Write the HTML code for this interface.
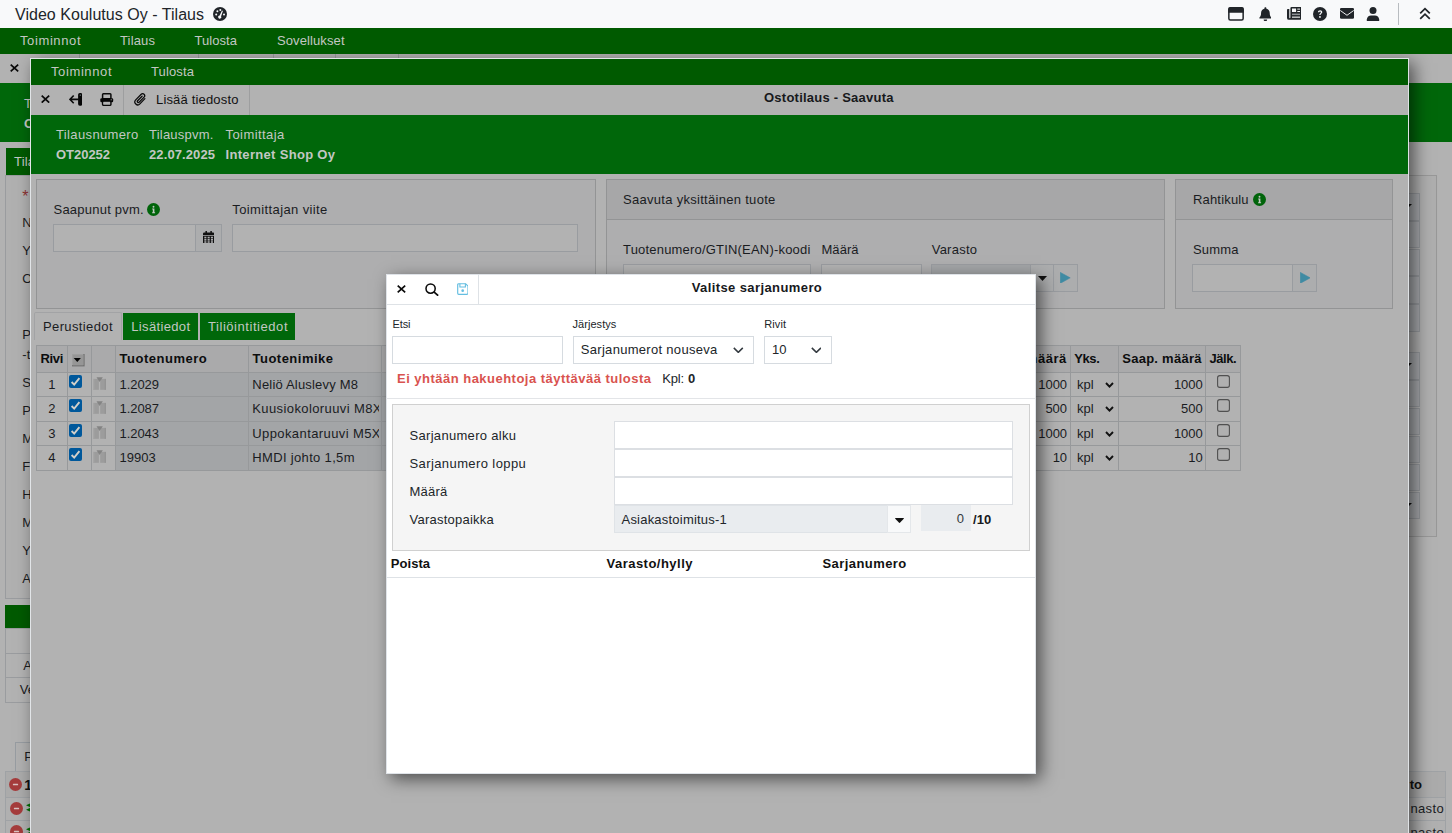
<!DOCTYPE html>
<html lang="fi"><head><meta charset="utf-8"><title>Video Koulutus Oy - Tilaus</title>
<style>
html,body{margin:0;padding:0}
body{width:1452px;height:833px;overflow:hidden;position:relative;background:#b2b2b2;font-family:"Liberation Sans",sans-serif}
#page,#m1,#m2{position:absolute;left:0;top:0;width:1452px;height:833px;overflow:hidden}
#m1{top:54px;height:779px}
#page div,#page svg,#page span,#m1 div,#m1 svg,#m1 span,#m2 div,#m2 svg,#m2 span{position:absolute}
.t{white-space:pre;line-height:0}
</style></head>
<body>
<div id="page">
<div style="left:0.00px;top:0.00px;width:1452.00px;height:28.00px;background:#f8f9fa;"></div>
<span class="t" style="left:15.00px;top:15.00px;font-size:16px;color:#212529;letter-spacing:0.030px;">Video Koulutus Oy - Tilaus</span>
<svg style="left:213.00px;top:7.00px;" width="14.00" height="14.00" viewBox="0 0 14 14" preserveAspectRatio="none"><circle cx="7" cy="7" r="7" fill="#212529"/><circle cx="3.2" cy="7.4" r="1" fill="#f8f9fa"/><circle cx="4.4" cy="4.2" r="1" fill="#f8f9fa"/><circle cx="7.3" cy="2.9" r="1" fill="#f8f9fa"/><circle cx="11" cy="7.4" r="1" fill="#f8f9fa"/><path d="M9 3.6 L9.9 3.9 L8.1 9.2 A1.6 1.6 0 1 1 6.6 8.4 Z" fill="#f8f9fa"/></svg>
<svg style="left:1228.00px;top:7.00px;" width="16.00" height="13.80" viewBox="0 0 16 13.8" preserveAspectRatio="none"><rect x="0.85" y="0.85" width="14.3" height="12.1" rx="1.5" fill="none" stroke="#212529" stroke-width="1.5"/><path d="M0.2 5.8 V2.2 A2 2 0 0 1 2.2 0.2 H13.8 A2 2 0 0 1 15.8 2.2 V5.8 Z" fill="#212529"/></svg>
<svg style="left:1258.70px;top:6.50px;" width="12.80" height="14.50" viewBox="0 0 13 15" preserveAspectRatio="none"><path d="M6.5 0.2 C7.1 0.2 7.5 0.7 7.5 1.2 V1.7 C9.6 2.2 10.9 4 10.9 6.2 C10.9 8.8 11.6 9.9 12.5 10.8 C12.9 11.3 12.6 12 12 12 H1 C0.4 12 0.1 11.3 0.5 10.8 C1.4 9.9 2.1 8.8 2.1 6.2 C2.1 4 3.4 2.2 5.5 1.7 V1.2 C5.5 0.7 5.9 0.2 6.5 0.2 Z M4.7 12.9 H8.3 A1.8 1.8 0 0 1 4.7 12.9 Z" fill="#212529"/></svg>
<svg style="left:1286.60px;top:7.30px;" width="14.60" height="12.80" viewBox="0 0 14.6 12.8" preserveAspectRatio="none"><path d="M4.6 0 H13.4 A1.2 1.2 0 0 1 14.6 1.2 V11 A1.8 1.8 0 0 1 12.8 12.8 H1.9 A1.9 1.9 0 0 1 0 10.9 V2.9 A0.8 0.8 0 0 1 0.8 2.1 H2.3 V10.6 A0.55 0.55 0 0 0 3.4 10.6 V1.2 A1.2 1.2 0 0 1 4.6 0 Z" fill="#212529"/><rect x="5" y="1.5" width="4.1" height="3.5" fill="#f8f9fa"/><rect x="10.3" y="1.6" width="2.7" height="1" fill="#f8f9fa"/><rect x="10.3" y="4" width="2.7" height="1" fill="#f8f9fa"/><rect x="5" y="6.6" width="8" height="1.5" fill="#8c9094"/><rect x="5" y="9.6" width="8" height="1.1" fill="#f8f9fa"/></svg>
<svg style="left:1313.00px;top:7.00px;" width="14.00" height="14.00" viewBox="0 0 14 14" preserveAspectRatio="none"><circle cx="7" cy="7" r="7" fill="#212529"/><path d="M4.9 5.3 C4.9 3.9 5.9 3.2 7.1 3.2 C8.4 3.2 9.3 4 9.3 5.1 C9.3 6.6 7.6 6.6 7.6 8.1 H6.3 C6.3 6.3 7.9 6.2 7.9 5.2 C7.9 4.7 7.6 4.4 7.1 4.4 C6.6 4.4 6.2 4.7 6.2 5.3 Z" fill="#f8f9fa"/><circle cx="6.95" cy="9.9" r="0.95" fill="#f8f9fa"/></svg>
<svg style="left:1340.00px;top:8.20px;" width="14.00" height="10.70" viewBox="0 0 14 10.7" preserveAspectRatio="none"><rect x="0" y="0" width="14" height="10.7" rx="1.3" fill="#212529"/><path d="M0.3 2.5 L7 7.3 L13.7 2.5" fill="none" stroke="#f8f9fa" stroke-width="0.95"/></svg>
<svg style="left:1366.00px;top:7.00px;" width="14.00" height="14.00" viewBox="0 0 14 14" preserveAspectRatio="none"><circle cx="7" cy="3.6" r="3.5" fill="#212529"/><path d="M0.8 14 V12.6 C0.8 9.9 3 8.4 5 8.4 H9 C11 8.4 13.2 9.9 13.2 12.6 V14 Z" fill="#212529"/></svg>
<div style="left:1398.00px;top:3.00px;width:1.00px;height:22.00px;background:#b8bcc0;"></div>
<svg style="left:1418.50px;top:6.80px;" width="12.00" height="13.00" viewBox="0 0 12 13" preserveAspectRatio="none"><path d="M1.2 6.3 L6 1.6 L10.8 6.3 M1.2 11.9 L6 7.2 L10.8 11.9" fill="none" stroke="#212529" stroke-width="1.75"/></svg>
<div style="left:0.00px;top:28.00px;width:1452.00px;height:26.00px;background:#005a00;"></div>
<span class="t" style="left:20.00px;top:41.00px;font-size:13px;color:#c3c7c3;letter-spacing:0.607px;">Toiminnot</span>
<span class="t" style="left:120.00px;top:41.00px;font-size:13px;color:#c3c7c3;letter-spacing:0.159px;">Tilaus</span>
<span class="t" style="left:194.50px;top:41.00px;font-size:13px;color:#c3c7c3;letter-spacing:0.057px;">Tulosta</span>
<span class="t" style="left:277.00px;top:41.00px;font-size:13px;color:#c3c7c3;letter-spacing:0.102px;">Sovellukset</span>
<div style="left:0.00px;top:54.00px;width:1452.00px;height:779.00px;background:#b2b2b2;"></div>
<div style="left:79.00px;top:54.00px;width:1.00px;height:29.00px;background:#9a9b9e;"></div>
<div style="left:198.00px;top:54.00px;width:1.00px;height:29.00px;background:#9a9b9e;"></div>
<div style="left:273.00px;top:54.00px;width:1.00px;height:29.00px;background:#9a9b9e;"></div>
<div style="left:335.00px;top:54.00px;width:1.00px;height:29.00px;background:#9a9b9e;"></div>
<div style="left:398.00px;top:54.00px;width:1.00px;height:29.00px;background:#9a9b9e;"></div>
<svg style="left:10.20px;top:64.00px;" width="8.90" height="8.00" viewBox="0 0 8.9 8" preserveAspectRatio="none"><path d="M0.7 0.7 L8.2 7.3 M8.2 0.7 L0.7 7.3" stroke="#0a0a0a" stroke-width="1.75" fill="none"/></svg>
<div style="left:0.00px;top:83.00px;width:1452.00px;height:59.00px;background:#00670a;"></div>
<span class="t" style="left:24.00px;top:104.00px;font-size:13px;color:#c3c7c3;">T</span>
<span class="t" style="left:24.00px;top:124.00px;font-size:13px;color:#c3c7c3;font-weight:700;">O</span>
<div style="left:6.00px;top:148.00px;width:54.00px;height:27.00px;background:#005a00;"></div>
<span class="t" style="left:14.00px;top:162.00px;font-size:13px;color:#c3c7c3;letter-spacing:0.177px;">Tila</span>
<div style="left:5.00px;top:175.00px;width:695.00px;height:424.00px;background:#b0b0b0;border:1px solid #9a9c9f;box-sizing:border-box;"></div>
<div style="left:800.00px;top:175.00px;width:637.00px;height:362.00px;background:#aeaeae;border:1px solid #989898;box-sizing:border-box;"></div>
<span class="t" style="left:22.30px;top:197.00px;font-size:16px;color:#8c3232;">*</span>
<span class="t" style="left:22.30px;top:223.00px;font-size:13px;color:#1a1c1f;">N</span>
<span class="t" style="left:22.30px;top:251.00px;font-size:13px;color:#1a1c1f;">Y</span>
<span class="t" style="left:22.30px;top:279.00px;font-size:13px;color:#1a1c1f;">O</span>
<span class="t" style="left:22.30px;top:335.00px;font-size:13px;color:#1a1c1f;">P</span>
<span class="t" style="left:22.30px;top:355.00px;font-size:13px;color:#1a1c1f;">-t</span>
<span class="t" style="left:22.30px;top:383.00px;font-size:13px;color:#1a1c1f;">S</span>
<span class="t" style="left:22.30px;top:411.00px;font-size:13px;color:#1a1c1f;">P</span>
<span class="t" style="left:22.30px;top:439.00px;font-size:13px;color:#1a1c1f;">M</span>
<span class="t" style="left:22.30px;top:467.00px;font-size:13px;color:#1a1c1f;">F</span>
<span class="t" style="left:22.30px;top:495.00px;font-size:13px;color:#1a1c1f;">H</span>
<span class="t" style="left:22.30px;top:523.00px;font-size:13px;color:#1a1c1f;">M</span>
<span class="t" style="left:22.30px;top:551.00px;font-size:13px;color:#1a1c1f;">Y</span>
<span class="t" style="left:22.30px;top:579.00px;font-size:13px;color:#1a1c1f;">A</span>
<div style="left:5.00px;top:605.00px;width:395.00px;height:23.00px;background:#005a00;"></div>
<div style="left:5.00px;top:628.00px;width:395.00px;height:75.00px;background:#b2b2b2;border:1px solid #9a9c9f;box-sizing:border-box;"></div>
<div style="left:5.00px;top:653.00px;width:395.00px;height:1.00px;background:#9a9c9f;"></div>
<div style="left:5.00px;top:677.00px;width:395.00px;height:1.00px;background:#9a9c9f;"></div>
<span class="t" style="left:23.20px;top:666.00px;font-size:13px;color:#1a1c1f;">A</span>
<span class="t" style="left:19.80px;top:690.00px;font-size:13px;color:#1a1c1f;">Ve</span>
<div style="left:15.00px;top:742.00px;width:85.00px;height:30.00px;background:#b0b0b0;border:1px solid #979ca1;box-sizing:border-box;"></div>
<span class="t" style="left:24.30px;top:757.00px;font-size:13px;color:#1a1c1f;">P</span>
<div style="left:5.00px;top:771.00px;width:1441.00px;height:69.00px;background:#b0b0b0;border:1px solid #9fa2a5;box-sizing:border-box;"></div>
<div style="left:5.00px;top:771.00px;width:1441.00px;height:27.00px;background:#ababab;border:1px solid #9fa2a5;box-sizing:border-box;"></div>
<div style="left:6.00px;top:820.00px;width:1440.00px;height:1.00px;background:#9fa2a5;"></div>
<svg style="left:9.00px;top:777.70px;" width="13.00" height="13.00" viewBox="0 0 13 13" preserveAspectRatio="none"><circle cx="6.5" cy="6.5" r="6.5" fill="#a53c3c"/><rect x="3.9" y="5.65" width="5.2" height="1.7" rx="0.5" fill="#d9c0c0"/></svg>
<svg style="left:9.80px;top:801.50px;" width="13.00" height="13.00" viewBox="0 0 13 13" preserveAspectRatio="none"><circle cx="6.5" cy="6.5" r="6.5" fill="#a53c3c"/><rect x="3.9" y="5.65" width="5.2" height="1.7" rx="0.5" fill="#d9c0c0"/></svg>
<svg style="left:9.80px;top:825.10px;" width="13.00" height="13.00" viewBox="0 0 13 13" preserveAspectRatio="none"><circle cx="6.5" cy="6.5" r="6.5" fill="#a53c3c"/><rect x="3.9" y="5.65" width="5.2" height="1.7" rx="0.5" fill="#d9c0c0"/></svg>
<span class="t" style="left:24.20px;top:785.00px;font-size:14px;color:#111;font-weight:700;">1</span>
<svg style="left:25.70px;top:803.00px;" width="6.00" height="9.00" viewBox="0 0 6 9" preserveAspectRatio="none"><path d="M0 2.3 L6 -0.4 V5 Z M0 6.7 L6 4 V9.4 Z" fill="#006e00"/></svg>
<svg style="left:25.70px;top:826.60px;" width="6.00" height="9.00" viewBox="0 0 6 9" preserveAspectRatio="none"><path d="M0 2.3 L6 -0.4 V5 Z M0 6.7 L6 4 V9.4 Z" fill="#006e00"/></svg>
<div style="left:1300.00px;top:193.00px;width:120.00px;height:27.60px;background:#a6a8ab;border:1px solid #94979b;box-sizing:border-box;"></div>
<div style="left:1300.00px;top:220.80px;width:120.00px;height:27.60px;background:#a6a8ab;border:1px solid #94979b;box-sizing:border-box;"></div>
<div style="left:1300.00px;top:248.60px;width:120.00px;height:27.60px;background:#a6a8ab;border:1px solid #94979b;box-sizing:border-box;"></div>
<div style="left:1300.00px;top:276.40px;width:120.00px;height:27.60px;background:#a6a8ab;border:1px solid #94979b;box-sizing:border-box;"></div>
<div style="left:1300.00px;top:304.20px;width:120.00px;height:27.60px;background:#a6a8ab;border:1px solid #94979b;box-sizing:border-box;"></div>
<div style="left:1300.00px;top:352.00px;width:120.00px;height:27.60px;background:#a6a8ab;border:1px solid #94979b;box-sizing:border-box;"></div>
<div style="left:1300.00px;top:379.90px;width:120.00px;height:27.60px;background:#a6a8ab;border:1px solid #94979b;box-sizing:border-box;"></div>
<div style="left:1300.00px;top:407.80px;width:120.00px;height:27.60px;background:#a6a8ab;border:1px solid #94979b;box-sizing:border-box;"></div>
<div style="left:1300.00px;top:435.70px;width:120.00px;height:27.60px;background:#a6a8ab;border:1px solid #94979b;box-sizing:border-box;"></div>
<div style="left:1300.00px;top:463.60px;width:120.00px;height:27.60px;background:#a6a8ab;border:1px solid #94979b;box-sizing:border-box;"></div>
<div style="left:1300.00px;top:491.50px;width:120.00px;height:27.60px;background:#a6a8ab;border:1px solid #94979b;box-sizing:border-box;"></div>
<svg style="left:1403.40px;top:204.40px;" width="9.00" height="4.60" viewBox="0 0 9 4.6" preserveAspectRatio="none"><path d="M0 0 H9 L4.5 4.6 Z" fill="#0a0a0a"/></svg>
<svg style="left:1403.40px;top:363.20px;" width="9.00" height="4.60" viewBox="0 0 9 4.6" preserveAspectRatio="none"><path d="M0 0 H9 L4.5 4.6 Z" fill="#0a0a0a"/></svg>
<svg style="left:1403.40px;top:503.20px;" width="9.00" height="4.60" viewBox="0 0 9 4.6" preserveAspectRatio="none"><path d="M0 0 H9 L4.5 4.6 Z" fill="#0a0a0a"/></svg>
<span class="t" style="left:1409.71px;top:785.00px;font-size:13px;color:#111;font-weight:700;">to</span>
<span class="t" style="left:1410.40px;top:809.00px;font-size:13px;color:#1a1c1f;letter-spacing:0.372px;">nasto</span>
<span class="t" style="left:1410.40px;top:833.00px;font-size:13px;color:#1a1c1f;letter-spacing:0.372px;">nasto</span>
</div>
<div id="m1">
<div style="left:30px;top:4px;width:1379px;height:800px;background:#b2b2b2;box-shadow:5px 5px 16px rgba(0,0,0,.56);"></div>
<div style="left:30.00px;top:4.00px;width:1379.00px;height:1.00px;background:#e2e5e8;"></div>
<div style="left:30.00px;top:4.00px;width:1.00px;height:775.00px;background:#e2e5e8;"></div>
<div style="left:1408.00px;top:4.00px;width:1.00px;height:775.00px;background:#dfe2e5;"></div>
<div style="left:31.00px;top:5.00px;width:1377.00px;height:26.00px;background:#005a00;"></div>
<span class="t" style="left:51.00px;top:18.00px;font-size:13px;color:#c3c7c3;letter-spacing:0.607px;">Toiminnot</span>
<span class="t" style="left:151.00px;top:18.00px;font-size:13px;color:#c3c7c3;letter-spacing:0.141px;">Tulosta</span>
<svg style="left:41.30px;top:40.90px;" width="8.90" height="8.30" viewBox="0 0 8.9 8.3" preserveAspectRatio="none"><path d="M0.7 0.7 L8.2 7.6 M8.2 0.7 L0.7 7.6" stroke="#0a0a0a" stroke-width="1.75" fill="none"/></svg>
<svg style="left:68.50px;top:39.00px;" width="13.50" height="13.00" viewBox="0 0 13.5 13" preserveAspectRatio="none"><path d="M1 6.4 H9.5 M4.7 2.5 L0.9 6.4 L4.7 10.3" stroke="#0a0a0a" stroke-width="1.6" fill="none"/><rect x="9.1" y="0.1" width="4.3" height="12.7" rx="1.7" fill="#050505"/><circle cx="11.25" cy="2.1" r="0.6" fill="#9aa"/></svg>
<svg style="left:100.20px;top:38.70px;" width="13.50" height="13.00" viewBox="0 0 13.5 13" preserveAspectRatio="none"><rect x="2.6" y="0.8" width="8.3" height="5" rx="0.8" fill="none" stroke="#0a0a0a" stroke-width="1.5"/><rect x="2.6" y="8" width="8.3" height="4.2" rx="0.6" fill="#b2b2b2" stroke="#0a0a0a" stroke-width="1.5"/><rect x="0.3" y="5.2" width="12.9" height="4.1" rx="1.2" fill="#050505"/><circle cx="11.2" cy="6.7" r="0.55" fill="#ccc"/><rect x="3.4" y="8.8" width="6.7" height="2.7" fill="#b2b2b2"/></svg>
<div style="left:123.00px;top:31.00px;width:1.00px;height:29.50px;background:#9d9e9f;"></div>
<svg style="left:134.00px;top:39.00px;" width="12.00" height="12.80" viewBox="0 0 12 12.8" preserveAspectRatio="none"><path d="M10.9 5.6 L5.9 10.9 A2.9 2.9 0 0 1 1.7 6.9 L7.2 1.3 A2 2 0 0 1 10.1 4.1 L5.1 9.2 A1 1 0 0 1 3.6 7.8 L8.1 3.2" stroke="#0a0a0a" stroke-width="1.25" fill="none" stroke-linecap="round"/></svg>
<span class="t" style="left:156.00px;top:46.00px;font-size:13px;color:#111;letter-spacing:0.167px;">Lisää tiedosto</span>
<div style="left:249.00px;top:31.00px;width:1.00px;height:29.50px;background:#9d9e9f;"></div>
<span class="t" style="left:764.00px;top:44.00px;font-size:13px;color:#17191c;font-weight:700;letter-spacing:0.238px;">Ostotilaus - Saavuta</span>
<div style="left:31.00px;top:60.50px;width:1377.00px;height:59.00px;background:#00670a;"></div>
<span class="t" style="left:56.00px;top:81.00px;font-size:13px;color:#c3c7c3;letter-spacing:0.365px;">Tilausnumero</span>
<span class="t" style="left:149.00px;top:81.00px;font-size:13px;color:#c3c7c3;letter-spacing:0.214px;">Tilauspvm.</span>
<span class="t" style="left:225.50px;top:81.00px;font-size:13px;color:#c3c7c3;letter-spacing:0.431px;">Toimittaja</span>
<span class="t" style="left:56.00px;top:101.00px;font-size:13px;color:#c3c7c3;font-weight:700;letter-spacing:-0.034px;">OT20252</span>
<span class="t" style="left:149.00px;top:101.00px;font-size:13px;color:#c3c7c3;font-weight:700;letter-spacing:0.102px;">22.07.2025</span>
<span class="t" style="left:225.50px;top:101.00px;font-size:13px;color:#c3c7c3;font-weight:700;letter-spacing:0.318px;">Internet Shop Oy</span>
<div style="left:36.00px;top:125.00px;width:560.00px;height:130.00px;background:#aeaeaf;border:1px solid #939495;box-sizing:border-box;"></div>
<div style="left:606.00px;top:125.00px;width:559.00px;height:130.00px;background:#aeaeaf;border:1px solid #939495;box-sizing:border-box;"></div>
<div style="left:607.00px;top:126.00px;width:557.00px;height:39.00px;background:#a7a7a8;"></div>
<div style="left:606.00px;top:165.00px;width:559.00px;height:1.00px;background:#939495;"></div>
<div style="left:1175.00px;top:125.00px;width:218.00px;height:130.00px;background:#aeaeaf;border:1px solid #939495;box-sizing:border-box;"></div>
<div style="left:1176.00px;top:126.00px;width:216.00px;height:39.00px;background:#a7a7a8;"></div>
<div style="left:1175.00px;top:165.00px;width:218.00px;height:1.00px;background:#939495;"></div>
<span class="t" style="left:53.50px;top:156.00px;font-size:13px;color:#1a1c1f;letter-spacing:0.229px;">Saapunut pvm.</span>
<svg style="left:147.00px;top:148.80px;" width="13.00" height="13.00" viewBox="0 0 13 13" preserveAspectRatio="none"><circle cx="6.5" cy="6.5" r="6.5" fill="#00640a"/><path d="M5.2 5.4 H7.4 V9.3 H8.1 V10.3 H5.1 V9.3 H5.8 V6.4 H5.2 Z" fill="#c4c8c4"/><circle cx="6.5" cy="3.7" r="0.95" fill="#c4c8c4"/></svg>
<span class="t" style="left:232.30px;top:156.00px;font-size:13px;color:#1a1c1f;letter-spacing:0.383px;">Toimittajan viite</span>
<div style="left:53.00px;top:170.00px;width:143.00px;height:28.00px;background:#b2b2b2;border:1px solid #999ca0;box-sizing:border-box;"></div>
<div style="left:195.00px;top:170.00px;width:27.00px;height:28.00px;background:#acadae;border:1px solid #999ca0;box-sizing:border-box;"></div>
<svg style="left:202.60px;top:176.70px;" width="11.30" height="12.80" viewBox="0 0 12 13" preserveAspectRatio="none"><path d="M2.6 0 H4.2 V1.5 H7.8 V0 H9.4 V1.5 H10.6 A1.4 1.4 0 0 1 12 2.9 V4 H0 V2.9 A1.4 1.4 0 0 1 1.4 1.5 H2.6 Z M0 4.8 H12 V11.6 A1.4 1.4 0 0 1 10.6 13 H1.4 A1.4 1.4 0 0 1 0 11.6 Z" fill="#111"/><g fill="#acadae"><rect x="1.4" y="5.8" width="2.2" height="1.7"/><rect x="4.9" y="5.8" width="2.2" height="1.7"/><rect x="8.4" y="5.8" width="2.2" height="1.7"/><rect x="1.4" y="8.1" width="2.2" height="1.7"/><rect x="4.9" y="8.1" width="2.2" height="1.7"/><rect x="8.4" y="8.1" width="2.2" height="1.7"/><rect x="1.4" y="10.4" width="2.2" height="1.6"/><rect x="4.9" y="10.4" width="2.2" height="1.6"/><rect x="8.4" y="10.4" width="2.2" height="1.6"/></g></svg>
<div style="left:232.00px;top:170.00px;width:346.00px;height:28.00px;background:#b2b2b2;border:1px solid #999ca0;box-sizing:border-box;"></div>
<span class="t" style="left:623.00px;top:146.00px;font-size:13px;color:#1a1c1f;letter-spacing:0.293px;">Saavuta yksittäinen tuote</span>
<span class="t" style="left:623.00px;top:196.00px;font-size:13px;color:#1a1c1f;letter-spacing:0.192px;">Tuotenumero/GTIN(EAN)-koodi</span>
<span class="t" style="left:821.50px;top:196.00px;font-size:13px;color:#1a1c1f;letter-spacing:0.035px;">Määrä</span>
<span class="t" style="left:931.70px;top:196.00px;font-size:13px;color:#1a1c1f;letter-spacing:0.243px;">Varasto</span>
<div style="left:623.00px;top:210.00px;width:188.00px;height:28.00px;background:#b2b2b2;border:1px solid #999ca0;box-sizing:border-box;"></div>
<div style="left:821.00px;top:210.00px;width:101.00px;height:28.00px;background:#b2b2b2;border:1px solid #999ca0;box-sizing:border-box;"></div>
<div style="left:931.00px;top:210.00px;width:100.00px;height:28.00px;background:#a3a5a7;border:1px solid #999ca0;box-sizing:border-box;"></div>
<div style="left:1030.00px;top:210.00px;width:24.00px;height:28.00px;background:#acadae;border:1px solid #999ca0;box-sizing:border-box;"></div>
<svg style="left:1038.00px;top:222.00px;" width="9.00" height="5.00" viewBox="0 0 9 5" preserveAspectRatio="none"><path d="M0 0 H9 L4.5 5 Z" fill="#111"/></svg>
<div style="left:1053.00px;top:210.00px;width:25.00px;height:28.00px;background:#acadae;border:1px solid #999ca0;box-sizing:border-box;"></div>
<svg style="left:1060.30px;top:217.70px;" width="10.40" height="11.70" viewBox="0 0 10 12" preserveAspectRatio="none"><path d="M0.3 0.4 L9.8 6 L0.3 11.6 Z" fill="#3f8ba3" stroke="#3f8ba3" stroke-width="0.6" stroke-linejoin="round"/></svg>
<span class="t" style="left:1193.00px;top:146.00px;font-size:13px;color:#1a1c1f;letter-spacing:0.175px;">Rahtikulu</span>
<svg style="left:1252.50px;top:138.90px;" width="13.00" height="13.00" viewBox="0 0 13 13" preserveAspectRatio="none"><circle cx="6.5" cy="6.5" r="6.5" fill="#00640a"/><path d="M5.2 5.4 H7.4 V9.3 H8.1 V10.3 H5.1 V9.3 H5.8 V6.4 H5.2 Z" fill="#c4c8c4"/><circle cx="6.5" cy="3.7" r="0.95" fill="#c4c8c4"/></svg>
<span class="t" style="left:1193.00px;top:196.00px;font-size:13px;color:#1a1c1f;letter-spacing:0.151px;">Summa</span>
<div style="left:1192.00px;top:210.00px;width:101.00px;height:28.00px;background:#b2b2b2;border:1px solid #999ca0;box-sizing:border-box;"></div>
<div style="left:1292.00px;top:210.00px;width:25.00px;height:28.00px;background:#acadae;border:1px solid #999ca0;box-sizing:border-box;"></div>
<svg style="left:1300.10px;top:217.70px;" width="10.40" height="11.70" viewBox="0 0 10 12" preserveAspectRatio="none"><path d="M0.3 0.4 L9.8 6 L0.3 11.6 Z" fill="#3f8ba3" stroke="#3f8ba3" stroke-width="0.6" stroke-linejoin="round"/></svg>
<div style="left:34.00px;top:258.00px;width:88.00px;height:28.00px;background:#b2b2b2;border:1px solid #a2a3a5;box-sizing:border-box;border-bottom:none;border-radius:2px 2px 0 0;"></div>
<span class="t" style="left:43.00px;top:273.00px;font-size:13px;color:#1a1c1f;letter-spacing:0.373px;">Perustiedot</span>
<div style="left:123.00px;top:258.70px;width:75.00px;height:27.60px;background:#00670a;"></div>
<span class="t" style="left:131.30px;top:273.00px;font-size:13px;color:#c3c7c3;letter-spacing:0.338px;">Lisätiedot</span>
<div style="left:200.00px;top:258.70px;width:95.30px;height:27.60px;background:#00670a;"></div>
<span class="t" style="left:208.00px;top:273.00px;font-size:13px;color:#c3c7c3;letter-spacing:0.551px;">Tiliöintitiedot</span>
<div style="left:36.00px;top:291.00px;width:1204.50px;height:27.00px;background:#aaaaab;"></div>
<div style="left:115.00px;top:318.00px;width:921.00px;height:98.00px;background:#a3a5a7;"></div>
<div style="left:36.00px;top:291.00px;width:1205.00px;height:1.00px;background:#97999b;"></div>
<div style="left:36.00px;top:318.00px;width:1205.00px;height:1.00px;background:#97999b;"></div>
<div style="left:36.00px;top:342.00px;width:1205.00px;height:1.00px;background:#97999b;"></div>
<div style="left:36.00px;top:367.00px;width:1205.00px;height:1.00px;background:#97999b;"></div>
<div style="left:36.00px;top:391.00px;width:1205.00px;height:1.00px;background:#97999b;"></div>
<div style="left:36.00px;top:416.00px;width:1205.00px;height:1.00px;background:#97999b;"></div>
<div style="left:36.00px;top:291.00px;width:1.00px;height:125.50px;background:#97999b;"></div>
<div style="left:67.00px;top:291.00px;width:1.00px;height:125.50px;background:#97999b;"></div>
<div style="left:91.00px;top:291.00px;width:1.00px;height:125.50px;background:#97999b;"></div>
<div style="left:115.00px;top:291.00px;width:1.00px;height:125.50px;background:#97999b;"></div>
<div style="left:248.00px;top:291.00px;width:1.00px;height:125.50px;background:#97999b;"></div>
<div style="left:381.00px;top:291.00px;width:1.00px;height:125.50px;background:#97999b;"></div>
<div style="left:500.00px;top:291.00px;width:1.00px;height:125.50px;background:#97999b;"></div>
<div style="left:620.00px;top:291.00px;width:1.00px;height:125.50px;background:#97999b;"></div>
<div style="left:740.00px;top:291.00px;width:1.00px;height:125.50px;background:#97999b;"></div>
<div style="left:860.00px;top:291.00px;width:1.00px;height:125.50px;background:#97999b;"></div>
<div style="left:950.00px;top:291.00px;width:1.00px;height:125.50px;background:#97999b;"></div>
<div style="left:1010.00px;top:291.00px;width:1.00px;height:125.50px;background:#97999b;"></div>
<div style="left:1070.00px;top:291.00px;width:1.00px;height:125.50px;background:#97999b;"></div>
<div style="left:1118.00px;top:291.00px;width:1.00px;height:125.50px;background:#97999b;"></div>
<div style="left:1205.00px;top:291.00px;width:1.00px;height:125.50px;background:#97999b;"></div>
<div style="left:1240.00px;top:291.00px;width:1.00px;height:125.50px;background:#97999b;"></div>
<span class="t" style="left:40.50px;top:305.00px;font-size:13px;color:#0c0d0e;font-weight:700;letter-spacing:-0.348px;">Rivi</span>
<svg style="left:72.40px;top:300.20px;" width="12.60" height="12.40" viewBox="0 0 12.6 12.4" preserveAspectRatio="none"><rect x="0" y="0" width="12.6" height="12.4" fill="#6e6e6e"/><rect x="0" y="0" width="11.4" height="11.2" fill="#a0a0a0"/><rect x="0.9" y="0.9" width="10.5" height="10.3" fill="#969696"/><path d="M1.7 4 H8.9 L5.3 8 Z" fill="#050505"/></svg>
<span class="t" style="left:119.50px;top:305.00px;font-size:13px;color:#0c0d0e;font-weight:700;letter-spacing:0.521px;">Tuotenumero</span>
<span class="t" style="left:252.50px;top:305.00px;font-size:13px;color:#0c0d0e;font-weight:700;letter-spacing:0.489px;">Tuotenimike</span>
<span class="t" style="left:1025.80px;top:305.00px;font-size:13px;color:#0c0d0e;font-weight:700;letter-spacing:0.522px;">määrä</span>
<span class="t" style="left:1074.20px;top:305.00px;font-size:13px;color:#0c0d0e;font-weight:700;letter-spacing:-0.383px;">Yks.</span>
<span class="t" style="left:1122.20px;top:305.00px;font-size:13px;color:#0c0d0e;font-weight:700;letter-spacing:0.269px;">Saap. määrä</span>
<span class="t" style="left:1209.40px;top:305.00px;font-size:13px;color:#0c0d0e;font-weight:700;letter-spacing:-0.405px;">Jälk.</span>
<span class="t" style="left:48.13px;top:331.00px;font-size:13px;color:#1a1c1f;">1</span>
<svg style="left:69.00px;top:321.00px;" width="13.00" height="13.00" viewBox="0 0 13 13" preserveAspectRatio="none"><rect x="0" y="0" width="13" height="13" rx="2" fill="#00589b"/><path d="M2.6 7 L5.2 9.6 L10.4 3.2" stroke="#d3d0c9" stroke-width="1.9" fill="none"/></svg>
<svg style="left:93.00px;top:323.00px;" width="13.00" height="13.00" viewBox="0 0 13 13" preserveAspectRatio="none"><rect x="0.1" y="1.9" width="5.8" height="10.9" fill="#9c9c9c"/><rect x="7.2" y="1.9" width="5.7" height="10.9" fill="#9c9c9c"/><rect x="0.1" y="1.9" width="1.2" height="10.9" fill="#a6a6a6"/><rect x="11.7" y="1.9" width="1.2" height="10.9" fill="#939393"/><path d="M3.5 0.2 H9.8 L6.6 5 Z" fill="#838383"/></svg>
<span class="t" style="left:119.50px;top:331.00px;font-size:13px;color:#1a1c1f;letter-spacing:-0.053px;">1.2029</span>
<span class="t" style="left:252.30px;top:331.00px;font-size:13px;color:#1a1c1f;letter-spacing:0.193px;">Neliö Aluslevy M8</span>
<span class="t" style="left:1038.18px;top:331.00px;font-size:13px;color:#1a1c1f;">1000</span>
<span class="t" style="left:1076.94px;top:331.00px;font-size:13px;color:#1a1c1f;">kpl</span>
<svg style="left:1104.70px;top:327.50px;" width="9.00" height="6.00" viewBox="0 0 9 6" preserveAspectRatio="none"><path d="M1 1 L4.5 4.6 L8 1" stroke="#111" stroke-width="1.9" fill="none"/></svg>
<span class="t" style="left:1173.88px;top:331.00px;font-size:13px;color:#1a1c1f;">1000</span>
<svg style="left:1217.00px;top:321.00px;" width="13.00" height="13.00" viewBox="0 0 13 13" preserveAspectRatio="none"><rect x="0.6" y="0.6" width="11.8" height="11.8" rx="2.2" fill="#b0b0b0" stroke="#505050" stroke-width="1.1"/></svg>
<span class="t" style="left:48.13px;top:355.00px;font-size:13px;color:#1a1c1f;">2</span>
<svg style="left:69.00px;top:345.00px;" width="13.00" height="13.00" viewBox="0 0 13 13" preserveAspectRatio="none"><rect x="0" y="0" width="13" height="13" rx="2" fill="#00589b"/><path d="M2.6 7 L5.2 9.6 L10.4 3.2" stroke="#d3d0c9" stroke-width="1.9" fill="none"/></svg>
<svg style="left:93.00px;top:347.00px;" width="13.00" height="13.00" viewBox="0 0 13 13" preserveAspectRatio="none"><rect x="0.1" y="1.9" width="5.8" height="10.9" fill="#9c9c9c"/><rect x="7.2" y="1.9" width="5.7" height="10.9" fill="#9c9c9c"/><rect x="0.1" y="1.9" width="1.2" height="10.9" fill="#a6a6a6"/><rect x="11.7" y="1.9" width="1.2" height="10.9" fill="#939393"/><path d="M3.5 0.2 H9.8 L6.6 5 Z" fill="#838383"/></svg>
<span class="t" style="left:119.50px;top:355.00px;font-size:13px;color:#1a1c1f;letter-spacing:-0.053px;">1.2087</span>
<div style="left:249px;top:343px;width:129.60000000000002px;height:24px;overflow:hidden"><span class="t" style="left:3.30px;top:12px;font-size:13px;color:#1a1c1f;letter-spacing:0.393px;">Kuusiokoloruuvi M8X</span></div>
<span class="t" style="left:1045.40px;top:355.00px;font-size:13px;color:#1a1c1f;">500</span>
<span class="t" style="left:1076.94px;top:355.00px;font-size:13px;color:#1a1c1f;">kpl</span>
<svg style="left:1104.70px;top:351.50px;" width="9.00" height="6.00" viewBox="0 0 9 6" preserveAspectRatio="none"><path d="M1 1 L4.5 4.6 L8 1" stroke="#111" stroke-width="1.9" fill="none"/></svg>
<span class="t" style="left:1181.10px;top:355.00px;font-size:13px;color:#1a1c1f;">500</span>
<svg style="left:1217.00px;top:345.00px;" width="13.00" height="13.00" viewBox="0 0 13 13" preserveAspectRatio="none"><rect x="0.6" y="0.6" width="11.8" height="11.8" rx="2.2" fill="#b0b0b0" stroke="#505050" stroke-width="1.1"/></svg>
<span class="t" style="left:48.13px;top:380.00px;font-size:13px;color:#1a1c1f;">3</span>
<svg style="left:69.00px;top:370.00px;" width="13.00" height="13.00" viewBox="0 0 13 13" preserveAspectRatio="none"><rect x="0" y="0" width="13" height="13" rx="2" fill="#00589b"/><path d="M2.6 7 L5.2 9.6 L10.4 3.2" stroke="#d3d0c9" stroke-width="1.9" fill="none"/></svg>
<svg style="left:93.00px;top:372.00px;" width="13.00" height="13.00" viewBox="0 0 13 13" preserveAspectRatio="none"><rect x="0.1" y="1.9" width="5.8" height="10.9" fill="#9c9c9c"/><rect x="7.2" y="1.9" width="5.7" height="10.9" fill="#9c9c9c"/><rect x="0.1" y="1.9" width="1.2" height="10.9" fill="#a6a6a6"/><rect x="11.7" y="1.9" width="1.2" height="10.9" fill="#939393"/><path d="M3.5 0.2 H9.8 L6.6 5 Z" fill="#838383"/></svg>
<span class="t" style="left:119.50px;top:380.00px;font-size:13px;color:#1a1c1f;letter-spacing:-0.053px;">1.2043</span>
<div style="left:249px;top:368px;width:129.60000000000002px;height:24px;overflow:hidden"><span class="t" style="left:3.30px;top:12px;font-size:13px;color:#1a1c1f;letter-spacing:0.400px;">Uppokantaruuvi M5X</span></div>
<span class="t" style="left:1038.18px;top:380.00px;font-size:13px;color:#1a1c1f;">1000</span>
<span class="t" style="left:1076.94px;top:380.00px;font-size:13px;color:#1a1c1f;">kpl</span>
<svg style="left:1104.70px;top:376.50px;" width="9.00" height="6.00" viewBox="0 0 9 6" preserveAspectRatio="none"><path d="M1 1 L4.5 4.6 L8 1" stroke="#111" stroke-width="1.9" fill="none"/></svg>
<span class="t" style="left:1173.88px;top:380.00px;font-size:13px;color:#1a1c1f;">1000</span>
<svg style="left:1217.00px;top:370.00px;" width="13.00" height="13.00" viewBox="0 0 13 13" preserveAspectRatio="none"><rect x="0.6" y="0.6" width="11.8" height="11.8" rx="2.2" fill="#b0b0b0" stroke="#505050" stroke-width="1.1"/></svg>
<span class="t" style="left:48.13px;top:404.00px;font-size:13px;color:#1a1c1f;">4</span>
<svg style="left:69.00px;top:394.00px;" width="13.00" height="13.00" viewBox="0 0 13 13" preserveAspectRatio="none"><rect x="0" y="0" width="13" height="13" rx="2" fill="#00589b"/><path d="M2.6 7 L5.2 9.6 L10.4 3.2" stroke="#d3d0c9" stroke-width="1.9" fill="none"/></svg>
<svg style="left:93.00px;top:396.00px;" width="13.00" height="13.00" viewBox="0 0 13 13" preserveAspectRatio="none"><rect x="0.1" y="1.9" width="5.8" height="10.9" fill="#9c9c9c"/><rect x="7.2" y="1.9" width="5.7" height="10.9" fill="#9c9c9c"/><rect x="0.1" y="1.9" width="1.2" height="10.9" fill="#a6a6a6"/><rect x="11.7" y="1.9" width="1.2" height="10.9" fill="#939393"/><path d="M3.5 0.2 H9.8 L6.6 5 Z" fill="#838383"/></svg>
<span class="t" style="left:119.50px;top:404.00px;font-size:13px;color:#1a1c1f;letter-spacing:0.036px;">19903</span>
<span class="t" style="left:252.30px;top:404.00px;font-size:13px;color:#1a1c1f;letter-spacing:0.332px;">HMDI johto 1,5m</span>
<span class="t" style="left:1052.63px;top:404.00px;font-size:13px;color:#1a1c1f;">10</span>
<span class="t" style="left:1076.94px;top:404.00px;font-size:13px;color:#1a1c1f;">kpl</span>
<svg style="left:1104.70px;top:400.50px;" width="9.00" height="6.00" viewBox="0 0 9 6" preserveAspectRatio="none"><path d="M1 1 L4.5 4.6 L8 1" stroke="#111" stroke-width="1.9" fill="none"/></svg>
<span class="t" style="left:1188.33px;top:404.00px;font-size:13px;color:#1a1c1f;">10</span>
<svg style="left:1217.00px;top:394.00px;" width="13.00" height="13.00" viewBox="0 0 13 13" preserveAspectRatio="none"><rect x="0.6" y="0.6" width="11.8" height="11.8" rx="2.2" fill="#b0b0b0" stroke="#505050" stroke-width="1.1"/></svg>
</div>
<div id="m2">
<div style="left:386px;top:274px;width:650px;height:500px;box-sizing:border-box;border:1px solid #dfe3e8;background:#fff;box-shadow:5px 5px 16px rgba(0,0,0,.56);"></div>
<div style="left:386.20px;top:304.00px;width:649.60px;height:1.00px;background:#dee2e6;"></div>
<div style="left:478.00px;top:274.20px;width:1.00px;height:29.80px;background:#dee2e6;"></div>
<svg style="left:397.20px;top:284.90px;" width="8.90" height="8.00" viewBox="0 0 8.9 8" preserveAspectRatio="none"><path d="M0.7 0.7 L8.2 7.3 M8.2 0.7 L0.7 7.3" stroke="#0a0a0a" stroke-width="1.7" fill="none"/></svg>
<svg style="left:424.50px;top:282.50px;" width="14.00" height="13.50" viewBox="0 0 14 13.5" preserveAspectRatio="none"><circle cx="5.6" cy="5.6" r="4.6" fill="none" stroke="#0a0a0a" stroke-width="1.55"/><path d="M8.9 8.9 L13.2 12.7" stroke="#0a0a0a" stroke-width="1.7"/></svg>
<svg style="left:456.60px;top:283.00px;" width="11.60" height="12.00" viewBox="0 0 11.6 12" preserveAspectRatio="none"><path d="M1.7 0.7 H8.6 L11 3 V10.3 A1 1 0 0 1 10 11.3 H1.7 A1 1 0 0 1 0.7 10.3 V1.7 A1 1 0 0 1 1.7 0.7 Z" fill="none" stroke="#64bee1" stroke-width="1.15"/><path d="M2.9 0.8 V4 H8.4 V0.8" fill="none" stroke="#64bee1" stroke-width="1.1"/><circle cx="5.7" cy="7.7" r="1.35" fill="#64bee1"/></svg>
<span class="t" style="left:691.70px;top:288.00px;font-size:13px;color:#17191c;font-weight:700;letter-spacing:0.403px;">Valitse sarjanumero</span>
<span class="t" style="left:392.50px;top:324.00px;font-size:11px;color:#212529;letter-spacing:-0.115px;">Etsi</span>
<span class="t" style="left:572.50px;top:324.00px;font-size:11px;color:#212529;letter-spacing:0.049px;">Järjestys</span>
<span class="t" style="left:764.30px;top:324.00px;font-size:11px;color:#212529;letter-spacing:0.077px;">Rivit</span>
<div style="left:392.00px;top:336.00px;width:171.00px;height:28.00px;background:#fff;border:1px solid #d6dbe0;box-sizing:border-box;"></div>
<div style="left:573.00px;top:336.00px;width:181.00px;height:28.00px;background:#fff;border:1px solid #d6dbe0;box-sizing:border-box;"></div>
<span class="t" style="left:580.80px;top:350.00px;font-size:13px;color:#212529;letter-spacing:0.299px;">Sarjanumerot nouseva</span>
<svg style="left:733.20px;top:346.80px;" width="10.60" height="6.60" viewBox="0 0 10.6 6.6" preserveAspectRatio="none"><path d="M0.8 0.9 L5.3 5.4 L9.8 0.9" stroke="#343a40" stroke-width="1.5" fill="none"/></svg>
<div style="left:764.00px;top:336.00px;width:68.00px;height:28.00px;background:#fff;border:1px solid #d6dbe0;box-sizing:border-box;"></div>
<span class="t" style="left:771.92px;top:350.00px;font-size:13px;color:#212529;">10</span>
<svg style="left:810.70px;top:346.80px;" width="10.80" height="6.60" viewBox="0 0 10.6 6.6" preserveAspectRatio="none"><path d="M0.8 0.9 L5.3 5.4 L9.8 0.9" stroke="#343a40" stroke-width="1.5" fill="none"/></svg>
<span class="t" style="left:397.00px;top:379.00px;font-size:13px;color:#d9534f;font-weight:700;letter-spacing:0.480px;">Ei yhtään hakuehtoja täyttävää tulosta</span>
<span class="t" style="left:662.30px;top:379.00px;font-size:13px;color:#212529;letter-spacing:-0.235px;">Kpl:</span>
<span class="t" style="left:687.88px;top:379.00px;font-size:13px;color:#212529;font-weight:700;">0</span>
<div style="left:386.20px;top:398.00px;width:649.60px;height:1.00px;background:#e3e5e8;"></div>
<div style="left:392.00px;top:404.00px;width:638.00px;height:147.00px;background:#f5f5f5;border:1px solid #d0d0d0;box-sizing:border-box;"></div>
<span class="t" style="left:409.50px;top:436.00px;font-size:13px;color:#212529;letter-spacing:0.307px;">Sarjanumero alku</span>
<span class="t" style="left:409.50px;top:464.00px;font-size:13px;color:#212529;letter-spacing:0.403px;">Sarjanumero loppu</span>
<span class="t" style="left:409.50px;top:492.00px;font-size:13px;color:#212529;letter-spacing:0.235px;">Määrä</span>
<span class="t" style="left:409.50px;top:520.00px;font-size:13px;color:#212529;letter-spacing:0.240px;">Varastopaikka</span>
<div style="left:614.00px;top:421.00px;width:399.00px;height:28.00px;background:#fff;border:1px solid #dcdfe3;box-sizing:border-box;"></div>
<div style="left:614.00px;top:449.00px;width:399.00px;height:28.00px;background:#fff;border:1px solid #dcdfe3;box-sizing:border-box;"></div>
<div style="left:614.00px;top:477.00px;width:399.00px;height:28.00px;background:#fff;border:1px solid #dcdfe3;box-sizing:border-box;"></div>
<div style="left:614.00px;top:505.00px;width:274.00px;height:28.00px;background:#e9ecef;border:1px solid #dfe3e7;box-sizing:border-box;"></div>
<span class="t" style="left:621.50px;top:520.00px;font-size:13px;color:#212529;letter-spacing:0.214px;">Asiakastoimitus-1</span>
<div style="left:887.00px;top:505.00px;width:24.00px;height:28.00px;background:#f8f9fa;border:1px solid #e4e7ea;box-sizing:border-box;"></div>
<svg style="left:894.50px;top:517.50px;" width="9.00" height="5.00" viewBox="0 0 9 5" preserveAspectRatio="none"><path d="M0 0.6 Q0 0 0.6 0 H8.4 Q9 0 9 0.6 L4.9 4.8 Q4.5 5.1 4.1 4.8 Z" fill="#111"/></svg>
<div style="left:921.00px;top:505.00px;width:50.00px;height:26.00px;background:#e9ecef;"></div>
<span class="t" style="left:956.68px;top:519.00px;font-size:13px;color:#343a40;">0</span>
<span class="t" style="left:973.11px;top:520.00px;font-size:13px;color:#17191c;font-weight:700;">/10</span>
<span class="t" style="left:390.80px;top:564.00px;font-size:13px;color:#111;font-weight:700;letter-spacing:0.037px;">Poista</span>
<span class="t" style="left:606.50px;top:564.00px;font-size:13px;color:#111;font-weight:700;letter-spacing:0.482px;">Varasto/hylly</span>
<span class="t" style="left:822.50px;top:564.00px;font-size:13px;color:#111;font-weight:700;letter-spacing:0.432px;">Sarjanumero</span>
<div style="left:386.20px;top:577.00px;width:649.60px;height:1.00px;background:#dee2e6;"></div>
</div>
</body></html>
